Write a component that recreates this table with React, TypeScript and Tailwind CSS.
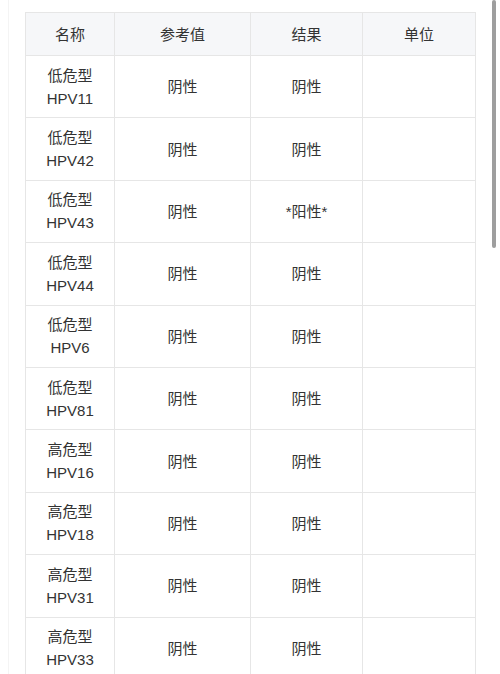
import React from 'react';

const rows: { name: [string, string]; ref: string; result: string; unit: string }[] = [
  { name: ['低危型', 'HPV11'], ref: '阴性', result: '阴性', unit: '' },
  { name: ['低危型', 'HPV42'], ref: '阴性', result: '阴性', unit: '' },
  { name: ['低危型', 'HPV43'], ref: '阴性', result: '*阳性*', unit: '' },
  { name: ['低危型', 'HPV44'], ref: '阴性', result: '阴性', unit: '' },
  { name: ['低危型', 'HPV6'], ref: '阴性', result: '阴性', unit: '' },
  { name: ['低危型', 'HPV81'], ref: '阴性', result: '阴性', unit: '' },
  { name: ['高危型', 'HPV16'], ref: '阴性', result: '阴性', unit: '' },
  { name: ['高危型', 'HPV18'], ref: '阴性', result: '阴性', unit: '' },
  { name: ['高危型', 'HPV31'], ref: '阴性', result: '阴性', unit: '' },
  { name: ['高危型', 'HPV33'], ref: '阴性', result: '阴性', unit: '' },
];

const App: React.FC = () => {
  return (
    <div
      className="relative w-[500px] h-[674px] overflow-hidden bg-white text-[#333] text-[15px] leading-[23px]"
      style={{ fontFamily: '"Liberation Sans", "Noto Sans CJK SC", sans-serif' }}
    >
      <div className="absolute left-[8px] top-0 h-full w-px bg-[#f4f4f4]" />

      <div className="pt-[12px] pl-[25px]">
        <table className="border-collapse table-fixed w-[450px]">
          <colgroup>
            <col className="w-[89px]" />
            <col className="w-[136px]" />
            <col className="w-[112px]" />
            <col className="w-[113px]" />
          </colgroup>
          <thead>
            <tr className="h-[43px] bg-[#f6f7f9]">
              {['名称', '参考值', '结果', '单位'].map(h => (
                <th key={h} className="border border-[#e6e6e6] font-normal text-center align-middle">
                  {h}
                </th>
              ))}
            </tr>
          </thead>
          <tbody>
            {rows.map(r => (
              <tr key={r.name[1]} className="h-[62.4px]">
                <td className="border border-[#e6e6e6] text-center align-middle">
                  <div>{r.name[0]}</div>
                  <div>{r.name[1]}</div>
                </td>
                <td className="border border-[#e6e6e6] text-center align-middle">{r.ref}</td>
                <td className="border border-[#e6e6e6] text-center align-middle">{r.result}</td>
                <td className="border border-[#e6e6e6] text-center align-middle">{r.unit}</td>
              </tr>
            ))}
          </tbody>
        </table>
      </div>

      {/* scrollbar */}
      <div className="absolute left-[492px] top-0 w-[4px] h-[248px] rounded-full bg-[#9e9e9e]" />
    </div>
  );
};

export default App;
